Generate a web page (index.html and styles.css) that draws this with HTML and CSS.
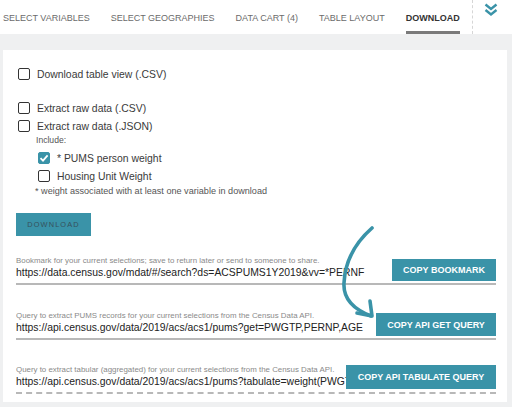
FILE: index.html
```html
<!DOCTYPE html>
<html>
<head>
<meta charset="utf-8">
<link rel="stylesheet" href="styles.css">
</head>
<body>
<header class="topbar">
  <nav class="tabs">
    <span class="tab">SELECT VARIABLES</span>
    <span class="tab">SELECT GEOGRAPHIES</span>
    <span class="tab">DATA CART (4)</span>
    <span class="tab">TABLE LAYOUT</span>
    <span class="tab active">DOWNLOAD</span>
  </nav>
  <div class="collapse">
    <svg width="14" height="14" viewBox="0 0 14 14"><path d="M1.5 1.5 L7 6 L12.5 1.5 M1.5 7 L7 11.5 L12.5 7" fill="none" stroke="#3a93a8" stroke-width="2.4"/></svg>
  </div>
</header>
<main class="page">
  <section class="panel">
    <label class="opt first"><span class="box"></span>Download table view (.CSV)</label>
    <label class="opt gap"><span class="box"></span>Extract raw data (.CSV)</label>
    <label class="opt"><span class="box"></span>Extract raw data (.JSON)</label>
    <div class="include">Include:</div>
    <label class="opt sub"><span class="box checked"><svg width="12" height="12" viewBox="0 0 12 12"><path d="M2.5 6.2 L5 8.6 L9.6 3.4" fill="none" stroke="#fff" stroke-width="1.8"/></svg></span>* PUMS person weight</label>
    <label class="opt sub"><span class="box"></span>Housing Unit Weight</label>
    <div class="note">* weight associated with at least one variable in download</div>
    <button class="dl">DOWNLOAD</button>

    <div class="field f1">
      <div class="fcol">
        <div class="flabel">Bookmark for your current selections; save to return later or send to someone to share.</div>
        <div class="furl">https://data.census.gov/mdat/#/search?ds=ACSPUMS1Y2019&amp;vv=*PERNF</div>
      </div>
      <button class="copy">COPY BOOKMARK</button>
    </div>

    <div class="field f2">
      <div class="fcol">
        <div class="flabel">Query to extract PUMS records for your current selections from the Census Data API.</div>
        <div class="furl">https://api.census.gov/data/2019/acs/acs1/pums?get=PWGTP,PERNP,AGE</div>
      </div>
      <button class="copy">COPY API GET QUERY</button>
    </div>

    <div class="field f3">
      <div class="fcol">
        <div class="flabel">Query to extract tabular (aggregated) for your current selections from the Census Data API.</div>
        <div class="furl">https://api.census.gov/data/2019/acs/acs1/pums?tabulate=weight(PWGTP)</div>
      </div>
      <button class="copy">COPY API TABULATE QUERY</button>
    </div>
  </section>
</main>
<svg class="arrow" width="512" height="407" viewBox="0 0 512 407">
  <path d="M372 228 C355 243 345 262 344 283 C343 299 353 309 371 316" fill="none" stroke="#3a93a8" stroke-width="3.6" stroke-linecap="round"/>
  <path d="M370 301 L372 316 L357 313" fill="none" stroke="#3a93a8" stroke-width="3.6" stroke-linecap="round" stroke-linejoin="round"/>
</svg>
</body>
</html>
```
FILE: styles.css
```css
* { box-sizing: border-box; }
html, body { margin: 0; padding: 0; }
body {
  width: 512px;
  height: 407px;
  overflow: hidden;
  position: relative;
  font-family: "Liberation Sans", Arial, sans-serif;
  background: #eff0f1;
  color: #333;
}
.topbar {
  height: 34px;
  background: #fff;
  display: flex;
  justify-content: space-between;
}
.tabs {
  display: flex;
  gap: 21px;
  padding-left: 3px;
}
.tab {
  height: 34px;
  padding-top: 5px;
  display: flex;
  align-items: center;
  font-size: 9px;
  color: #6b6b6b;
  border-bottom: 3px solid transparent;
  white-space: nowrap;
}
.tab.active {
  font-weight: bold;
  font-size: 9px;
  color: #333;
  border-bottom-color: #7a7a7a;
}
.collapse {
  width: 40px;
  height: 34px;
  border-left: 1px dashed #d6d6d6;
  display: flex;
  justify-content: center;
  padding-top: 3px;
  padding-right: 3px;
}
.page {
  padding: 16px 5px 5px 3px;
}
.panel {
  background: #fff;
  height: 352px;
  padding: 16px 11px 0 13px;
}
.opt {
  display: flex;
  align-items: center;
  height: 16px;
  margin-top: 2px;
  font-size: 10.4px;
  color: #3a3a3a;
  padding-left: 2px;
}
.opt.first { margin-top: 0; }
.opt.gap { margin-top: 18px; }
.opt.sub { padding-left: 22px; margin-top: 2px; }
.include + .opt.sub { margin-top: 4px; }
.box {
  width: 12px;
  height: 12px;
  border: 1.5px solid #333;
  border-radius: 2px;
  margin-right: 7px;
  flex: none;
  display: flex;
  align-items: center;
  justify-content: center;
}
.box.checked {
  background: #3a93a8;
  border-color: #3a93a8;
}
.box.checked svg { flex: none; }
.include {
  font-size: 8.6px;
  color: #555;
  line-height: 12px;
  padding-left: 20px;
}
.note {
  font-size: 9.1px;
  color: #555;
  line-height: 13px;
  padding-left: 19px;
  margin-top: 1px;
}
.dl {
  display: block;
  margin-top: 15px;
  width: 75px;
  height: 23px;
  border: none;
  background: #3a93a8;
  color: #36515b;
  font-family: "Liberation Sans", Arial, sans-serif;
  font-size: 7.4px;
  letter-spacing: 1.1px;
  padding: 0;
}
.field {
  display: flex;
  align-items: flex-end;
  border-bottom: 2px solid #b8b8b8;
  padding-bottom: 3px;
}
.f1 { margin-top: 20px; }
.f2 { margin-top: 26px; }
.f3 { margin-top: 25px; border-bottom: 2px dashed #b8b8b8; }
.fcol {
  flex: 1;
  min-width: 0;
  overflow: hidden;
}
.flabel {
  font-size: 7.9px;
  color: #8a8a8a;
  line-height: 10px;
  white-space: nowrap;
}
.furl {
  font-size: 10.4px;
  color: #222;
  line-height: 14px;
  white-space: nowrap;
  overflow: hidden;
}
.copy {
  flex: none;
  height: 22px;
  border: none;
  background: #3a93a8;
  color: #fff;
  font-family: "Liberation Sans", Arial, sans-serif;
  font-weight: bold;
  font-size: 9px;
  padding: 0 10px;
  margin-bottom: -1px;
}
.f1 .copy { width: 104px; }
.f2 .copy { width: 120px; height: 23px; }
.f3 .copy { width: 150px; height: 24px; margin-bottom: 0; }
.arrow {
  position: absolute;
  left: 0;
  top: 0;
  pointer-events: none;
}
```
